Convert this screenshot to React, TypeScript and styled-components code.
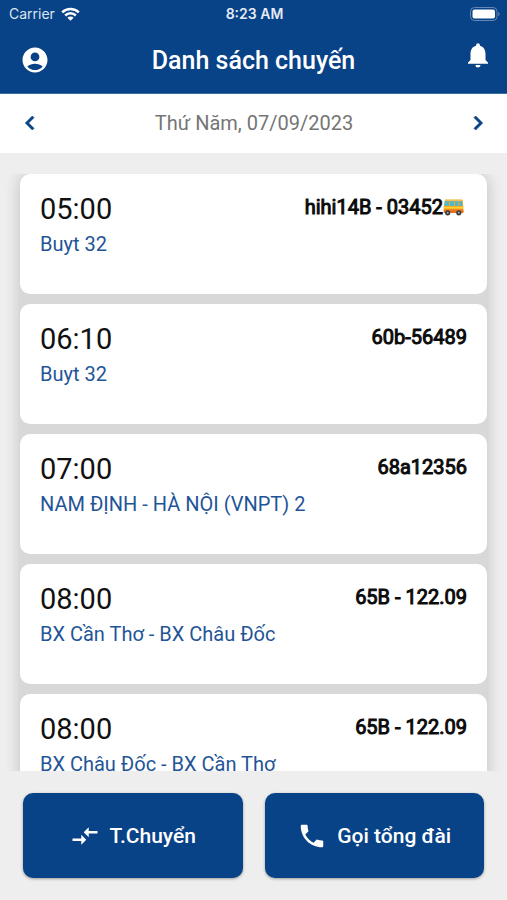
import React from "react";
import styled, { createGlobalStyle } from "styled-components";
import { MdCompareArrows, MdNotifications, MdPhone } from "react-icons/md";

const navy = "#084287";

const GlobalStyle = createGlobalStyle`
  * { box-sizing: border-box; }
  body { margin: 0; background: #eeeeee; font-family: Roboto, sans-serif; }
  h1, h2, p, ul { margin: 0; padding: 0; }
  button { border: 0; padding: 0; background: none; font-family: inherit; color: inherit; cursor: pointer; }
`;

const Screen = styled.div`
  display: flex;
  flex-direction: column;
  height: 100vh;
  background: #eeeeee;
`;

const Header = styled.header`
  flex: none;
  background: ${navy};
  color: #ffffff;
  border-bottom: 1px solid #3a6ba5;
`;

const StatusBar = styled.div`
  display: grid;
  grid-template-columns: 1fr auto 1fr;
  align-items: center;
  height: 28px;
  padding: 0 7px 0 9px;
  font-family: Inter, sans-serif;
  font-size: 14px;
  line-height: 20px;
`;

const Carrier = styled.span`
  display: flex;
  align-items: center;
  gap: 6px;
  color: #dbe5f1;
`;

const Clock = styled.time`
  font-weight: 600;
  color: #e4ebf4;
`;

const Battery = styled.span`
  display: flex;
  justify-content: flex-end;
`;

const TitleBar = styled.div`
  display: grid;
  grid-template-columns: 48px 1fr 54px;
  align-items: center;
  height: 65px;
  padding: 0 14px 0 20px;
`;

const Title = styled.h1`
  font-size: 25px;
  line-height: 32px;
  font-weight: 500;
  text-align: center;
`;

const IconButton = styled.button<{ $lift?: number }>`
  display: flex;
  align-items: center;
  justify-content: center;
  width: 30px;
  height: 30px;
  margin-bottom: ${(p) => p.$lift ?? 0}px;
  color: inherit;

  &:last-child {
    justify-self: end;
  }
`;

const DateBar = styled.nav`
  flex: none;
  display: flex;
  align-items: center;
  justify-content: space-between;
  height: 59px;
  padding: 0 14px 2px 15px;
  background: #ffffff;
  color: ${navy};
`;

const DateText = styled.span`
  font-size: 20px;
  line-height: 28px;
  color: #757575;
`;

const TripScroller = styled.main`
  flex: 1;
  min-height: 0;
  margin-top: 21px;
  padding: 0 20px;
  overflow: hidden auto;
  scrollbar-width: none;
`;

const TripList = styled.ul`
  display: flex;
  flex-direction: column;
  gap: 10px;
  list-style: none;
  border-radius: 10px;
  background: #d8d8d8;
  box-shadow: 0 0 16px rgba(0, 0, 0, 0.2);
`;

const TripCard = styled.li`
  display: flex;
  align-items: flex-start;
  justify-content: space-between;
  height: 120px;
  padding: 17px 20px;
  border-radius: 10px;
  background: #ffffff;
`;

const Departure = styled.h2`
  font-size: 29px;
  line-height: 36px;
  font-weight: 400;
  color: #111111;
`;

const Route = styled.p`
  font-size: 20px;
  line-height: 34px;
  color: #1f5597;
`;

const Plate = styled.span`
  display: flex;
  align-items: center;
  font-size: 20px;
  line-height: 32px;
  color: #0b0b0b;
  -webkit-text-stroke: 1px #0b0b0b;
`;

const BusIcon = styled.svg`
  margin-right: 3px;
`;

const Actions = styled.footer`
  flex: none;
  display: grid;
  grid-template-columns: 1fr 1fr;
  gap: 22px;
  padding: 22px 23px;
`;

const ActionButton = styled.button`
  display: flex;
  align-items: center;
  justify-content: center;
  gap: 10px;
  height: 85px;
  border-radius: 10px;
  background: ${navy};
  color: #ffffff;
  font-size: 21px;
  line-height: 28px;
  font-weight: 500;
  box-shadow: 0 1px 3px rgba(0, 0, 0, 0.35);
`;

const Chevron = ({ d }: { d: string }) => (
  <svg width="28" height="28" viewBox="0 0 24 24" fill="currentColor" stroke="currentColor" strokeWidth="0.6" aria-hidden="true">
    <path d={d} />
  </svg>
);

const AccountIcon = () => (
  <svg width="30" height="30" viewBox="0 0 24 24" fill="currentColor" aria-hidden="true">
    <path d="M12 2C6.48 2 2 6.48 2 12s4.48 10 10 10 10-4.48 10-10S17.52 2 12 2zm0 4c1.93 0 3.5 1.57 3.5 3.5S13.93 13 12 13s-3.5-1.57-3.5-3.5S10.07 6 12 6zm0 14c-2.03 0-4.43-.82-6.14-2.88C7.55 15.8 9.68 15 12 15s4.45.8 6.14 2.12C16.43 19.18 14.03 20 12 20z" />
  </svg>
);

const WifiIcon = () => (
  <svg width="19" height="14" viewBox="0 0 19 14" fill="none" stroke="#ffffff" strokeWidth="2.5" aria-hidden="true">
    <path d="M1.2 5.3a11.8 11.8 0 0 1 16.6 0" />
    <path d="M4.2 8.5a7.5 7.5 0 0 1 10.6 0" />
    <path d="M9.5 13.8 6.4 10.7a4.4 4.4 0 0 1 6.2 0z" fill="#ffffff" stroke="none" />
  </svg>
);

const BatteryIcon = () => (
  <svg width="30" height="14" viewBox="0 0 30 14" role="img" aria-label="Battery">
    <rect x="0.5" y="0.5" width="26.5" height="13" rx="4" fill="none" stroke="#6488b5" />
    <rect x="2.5" y="2.5" width="22.5" height="9" rx="2" fill="#ffffff" />
    <path d="M28.3 4.8c1.8.8 1.8 3.6 0 4.4z" fill="#6488b5" />
  </svg>
);

const Bus = () => (
  <BusIcon width="21" height="18" viewBox="0 0 21 18" role="img" aria-label="Bus">
    <path d="M2 1.5h16.5q1.3 0 1.4 1.5l.6 11H.8L.6 9z" fill="#f5a623" />
    <path d="M2 1h16.5l.8 1.5H1.6z" fill="#f4d68c" />
    <path d="M2 3h4v5H1.2zM7 3h4v5H7zM12 3h3.3v5H12zM16.3 3h2.8l.5 5h-3.3z" fill="#58b7c4" />
    <path d="M1 8.7h19.3v1.8H.8z" fill="#ffd02e" />
    <path d="M.8 11.5h19.6V15H.8z" fill="#e8711f" />
    <circle cx="4.7" cy="14.8" r="2.6" fill="#393b43" />
    <circle cx="15.8" cy="14.8" r="2.6" fill="#393b43" />
    <circle cx="4.7" cy="14.8" r="1" fill="#a9abb0" />
    <circle cx="15.8" cy="14.8" r="1" fill="#a9abb0" />
  </BusIcon>
);

interface Trip {
  time: string;
  route: string;
  plate: string;
  bus?: boolean;
}

const trips: Trip[] = [
  { time: "05:00", route: "Buyt 32", plate: "hihi14B - 03452", bus: true },
  { time: "06:10", route: "Buyt 32", plate: "60b-56489" },
  { time: "07:00", route: "NAM ĐỊNH - HÀ NỘI (VNPT) 2", plate: "68a12356" },
  { time: "08:00", route: "BX Cần Thơ - BX Châu Đốc", plate: "65B - 122.09" },
  { time: "08:00", route: "BX Châu Đốc - BX Cần Thơ", plate: "65B - 122.09" },
];

export default function App() {
  return (
    <Screen lang="vi">
      <GlobalStyle />
      <Header>
        <StatusBar>
          <Carrier>
            Carrier
            <WifiIcon />
          </Carrier>
          <Clock>8:23 AM</Clock>
          <Battery>
            <BatteryIcon />
          </Battery>
        </StatusBar>
        <TitleBar>
          <IconButton type="button" aria-label="Tài khoản" $lift={2}>
            <AccountIcon />
          </IconButton>
          <Title>Danh sách chuyến</Title>
          <IconButton type="button" aria-label="Thông báo" $lift={12}>
            <MdNotifications size={30} />
          </IconButton>
        </TitleBar>
      </Header>
      <DateBar>
        <IconButton type="button" aria-label="Ngày trước">
          <Chevron d="M15.41 7.41 14 6l-6 6 6 6 1.41-1.41L10.83 12z" />
        </IconButton>
        <DateText>Thứ Năm, 07/09/2023</DateText>
        <IconButton type="button" aria-label="Ngày sau">
          <Chevron d="M10 6 8.59 7.41 13.17 12l-4.58 4.59L10 18l6-6z" />
        </IconButton>
      </DateBar>
      <TripScroller>
        <TripList>
          {trips.map((trip, i) => (
            <TripCard key={i}>
              <div>
                <Departure>{trip.time}</Departure>
                <Route>{trip.route}</Route>
              </div>
              <Plate>
                {trip.plate}
                {trip.bus && <Bus />}
              </Plate>
            </TripCard>
          ))}
        </TripList>
      </TripScroller>
      <Actions>
        <ActionButton type="button">
          <MdCompareArrows size={30} />
          T.Chuyển
        </ActionButton>
        <ActionButton type="button">
          <MdPhone size={30} />
          Gọi tổng đài
        </ActionButton>
      </Actions>
    </Screen>
  );
}
